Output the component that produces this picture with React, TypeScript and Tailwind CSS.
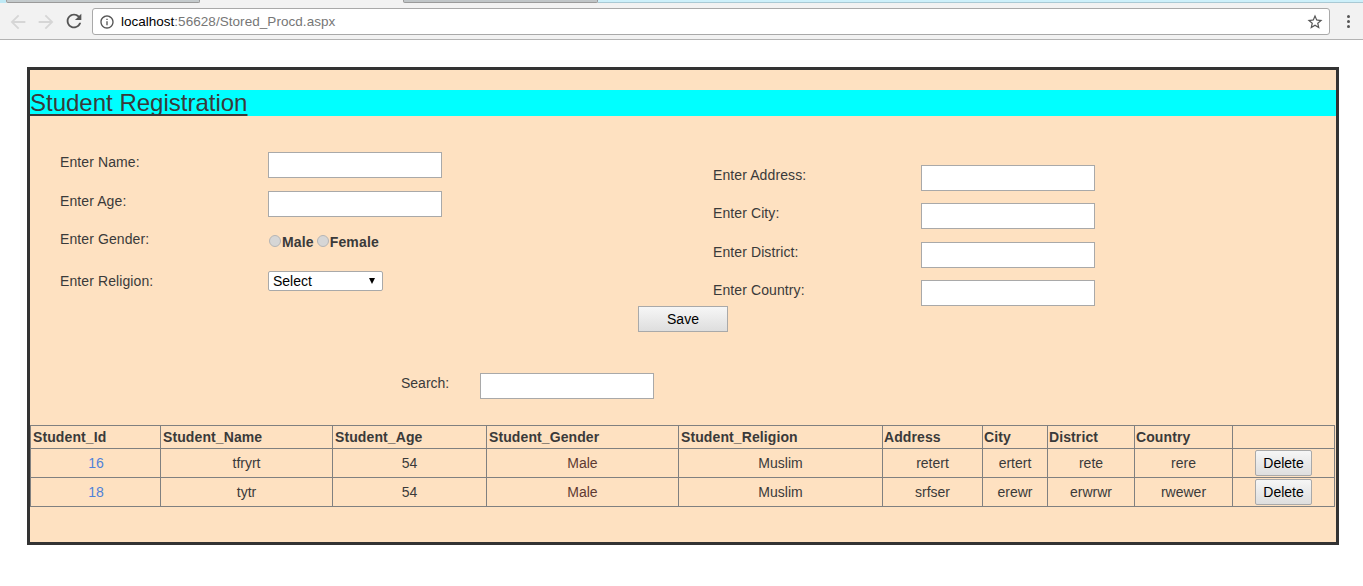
const rows = [
  { id: "16", name: "tfryrt", age: "54", gender: "Male", religion: "Muslim", address: "retert", city: "ertert", district: "rete", country: "rere" },
  { id: "18", name: "tytr", age: "54", gender: "Male", religion: "Muslim", address: "srfser", city: "erewr", district: "erwrwr", country: "rwewer" },
];

const headers = [
  { label: "Student_Id", width: "w-[130px]", pad: "pl-[2px]" },
  { label: "Student_Name", width: "w-[172px]", pad: "pl-[2px]" },
  { label: "Student_Age", width: "w-[154px]", pad: "pl-[2px]" },
  { label: "Student_Gender", width: "w-[192px]", pad: "pl-[2px]" },
  { label: "Student_Religion", width: "w-[204px]", pad: "pl-[2px]" },
  { label: "Address", width: "w-[100px]", pad: "pl-[1px]" },
  { label: "City", width: "w-[65px]", pad: "pl-[1px]" },
  { label: "District", width: "w-[87px]", pad: "pl-[1px]" },
  { label: "Country", width: "w-[98px]", pad: "pl-[1px]" },
  { label: "", width: "w-[102px]", pad: "" },
];

function ChromeIcon({ d, size, className }: { d: string; size: number; className: string }) {
  return (
    <svg width={size} height={size} viewBox="0 0 24 24" fill="currentColor" className={className}>
      <path d={d} />
    </svg>
  );
}

function TextBox() {
  return <input type="text" className="h-[26px] w-[174px] border border-[#a9a9a9] bg-white" />;
}

function Radio({ label }: { label: string }) {
  return (
    <label className="flex items-center font-bold tracking-[0.15px]">
      <span className="mx-[1px] -mt-[3px] h-[12px] w-[12px] rounded-full border border-[#b5b5b5] bg-[#d6d6d6]" />
      {label}
    </label>
  );
}

function Field({ label, className, children }: { label: string; className: string; children: React.ReactNode }) {
  return (
    <div className={`flex ${className}`}>
      <span className="w-[208px] tracking-[0.1px]">{label}</span>
      {children}
    </div>
  );
}

export default function App() {
  return (
    <div className="min-h-[586px] bg-white font-['Liberation_Sans',Arial,sans-serif] text-[14px] leading-[16px] text-[#3a3a3a]">
      <div className="flex h-[8px] bg-[#f2f2f2]">
        <div className="h-[3px] w-[6px] bg-[#bfe9f5]" />
        <div className="h-[3px] w-[194px] rounded-b-[2px] border-x border-b border-[#9a9a9a] bg-[#c4cacc]" />
        <div className="w-[203px]" />
        <div className="h-[3px] w-[195px] rounded-b-[2px] border-x border-b border-[#9a9a9a] bg-[#c0c5c7]" />
        <div className="h-[3px] flex-1 border-b border-[#a9c9d4] bg-[#cdf0fa]" />
      </div>
      <div className="flex h-[32px] items-start border-b border-[#b3b3b3] bg-[#f2f2f2] pl-[7px]">
        <ChromeIcon
          size={22}
          d="M20 11H7.83l5.59-5.59L12 4l-8 8 8 8 1.41-1.41L7.83 13H20v-2z"
          className="mt-[3px] text-[#d6d6d6]"
        />
        <ChromeIcon
          size={22}
          d="M12 4l-1.41 1.41L16.17 11H4v2h12.17l-5.58 5.59L12 20l8-8z"
          className="ml-[6px] mt-[3px] text-[#d6d6d6]"
        />
        <ChromeIcon
          size={22}
          d="M17.65 6.35C16.2 4.9 14.21 4 12 4c-4.42 0-7.99 3.58-7.99 8s3.57 8 7.99 8c3.73 0 6.84-2.55 7.73-6h-2.08c-.82 2.33-3.04 4-5.65 4-3.31 0-6-2.69-6-6s2.69-6 6-6c1.66 0 3.14.69 4.22 1.78L13 11h7V4l-2.35 2.35z"
          className="ml-[6px] mt-[2px] text-[#555555]"
        />
        <div className="ml-[7px] flex h-[27px] w-[1238px] items-center rounded-[3px] border border-[#a9a9a9] bg-white pl-[6px] pr-[5px] text-[13.5px]">
          <ChromeIcon
            size={16}
            d="M11 7h2v2h-2zm0 4h2v6h-2zm1-9C6.48 2 2 6.48 2 12s4.48 10 10 10 10-4.48 10-10S17.52 2 12 2zm0 18c-4.41 0-8-3.59-8-8s3.59-8 8-8 8 3.59 8 8-3.59 8-8 8z"
            className="text-[#555555]"
          />
          <span className="ml-[6px] text-black">localhost</span>
          <span className="tracking-[0.05px] text-[#767676]">:56628/Stored_Procd.aspx</span>
          <ChromeIcon
            size={18}
            d="M22 9.24l-7.19-.62L12 2 9.19 8.63 2 9.24l5.46 4.73L5.82 21 12 17.27 18.18 21l-1.63-7.03L22 9.24zM12 15.4l-3.76 2.27 1-4.28-3.32-2.88 4.38-.38L12 6.1l1.71 4.04 4.38.38-3.32 2.88 1 4.28L12 15.4z"
            className="ml-auto text-[#555555]"
          />
        </div>
        <div className="ml-[17px] mt-[7px] flex flex-col gap-[2px]">
          <span className="h-[3px] w-[3px] rounded-full bg-[#555555]" />
          <span className="h-[3px] w-[3px] rounded-full bg-[#555555]" />
          <span className="h-[3px] w-[3px] rounded-full bg-[#555555]" />
        </div>
      </div>

      <div className="pl-[27px] pt-[27px]">
        <div className="h-[478px] w-[1312px] border-[3px] border-[#333333] bg-[#fee1c1]">
          <div className="mt-[20px] h-[26px] bg-[#00ffff] text-[24px] leading-[26px]">
            <span className="underline decoration-[2px] underline-offset-[3px] [text-decoration-skip-ink:none]">
              Student Registration
            </span>
          </div>

          <div className="flex pl-[30px]">
            <div className="w-[653px] pt-[36px]">
              <Field label="Enter Name:" className="h-[39px] pt-[2px]">
                <div className="-mt-[2px]"><TextBox /></div>
              </Field>
              <Field label="Enter Age:" className="h-[40px] pt-[2px]">
                <div className="-mt-[2px]"><TextBox /></div>
              </Field>
              <Field label="Enter Gender:" className="h-[41px]">
                <div className="mt-[3px] flex items-start gap-[2px]">
                  <Radio label="Male" />
                  <Radio label="Female" />
                </div>
              </Field>
              <Field label="Enter Religion:" className="pt-[1px]">
                <select className="-mt-[2px] h-[20px] w-[115px] appearance-none rounded-[2px] border border-[#a9a9a9] bg-white pl-[4px] text-black">
                  <option>Select</option>
                </select>
                <span className="relative -ml-[14px] mt-[5px] h-0 w-0 border-x-[3.5px] border-t-[6px] border-x-transparent border-t-black" />
              </Field>
            </div>
            <div className="pt-[49px]">
              <Field label="Enter Address:" className="h-[38px] pt-[2px]">
                <div className="-mt-[2px]"><TextBox /></div>
              </Field>
              <Field label="Enter City:" className="h-[39px] pt-[2px]">
                <div className="-mt-[2px]"><TextBox /></div>
              </Field>
              <Field label="Enter District:" className="h-[38px] pt-[2px]">
                <div className="-mt-[2px]"><TextBox /></div>
              </Field>
              <Field label="Enter Country:" className="pt-[2px]">
                <div className="-mt-[2px]"><TextBox /></div>
              </Field>
            </div>
          </div>

          <div className="pl-[608px]">
            <button className="block h-[26px] w-[90px] border border-[#a9a9a9] bg-gradient-to-b from-[#f6f6f6] to-[#dedede] text-center text-black">
              Save
            </button>
          </div>

          <div className="mt-[41px] flex pl-[371px]">
            <span className="mt-[2px] w-[79px]">Search:</span>
            <TextBox />
          </div>

          <table className="ml-0 mt-[26px] w-[1305px] table-fixed border-collapse">
            <thead>
              <tr className="h-[23px]">
                {headers.map((h) => (
                  <th key={h.label} className={`${h.width} ${h.pad} border border-[#808080] text-left font-bold tracking-[0.1px]`}>
                    {h.label}
                  </th>
                ))}
              </tr>
            </thead>
            <tbody>
              {rows.map((r) => (
                <tr key={r.id} className="h-[29px] text-center">
                  <td className="border border-[#808080] pl-[1px] text-[#4f81d9]">{r.id}</td>
                  <td className="border border-[#808080]">{r.name}</td>
                  <td className="border border-[#808080]">{r.age}</td>
                  <td className="border border-[#808080] text-[#5e3a32]">{r.gender}</td>
                  <td className="border border-[#808080]">{r.religion}</td>
                  <td className="border border-[#808080]">{r.address}</td>
                  <td className="border border-[#808080]">{r.city}</td>
                  <td className="border border-[#808080]">{r.district}</td>
                  <td className="border border-[#808080]">{r.country}</td>
                  <td className="border border-[#808080]">
                    <button className="h-[26px] w-[57px] rounded-[2px] border border-[#a9a9a9] bg-gradient-to-b from-[#f6f6f6] to-[#dedede] text-black">
                      Delete
                    </button>
                  </td>
                </tr>
              ))}
            </tbody>
          </table>
        </div>
      </div>
    </div>
  );
}
